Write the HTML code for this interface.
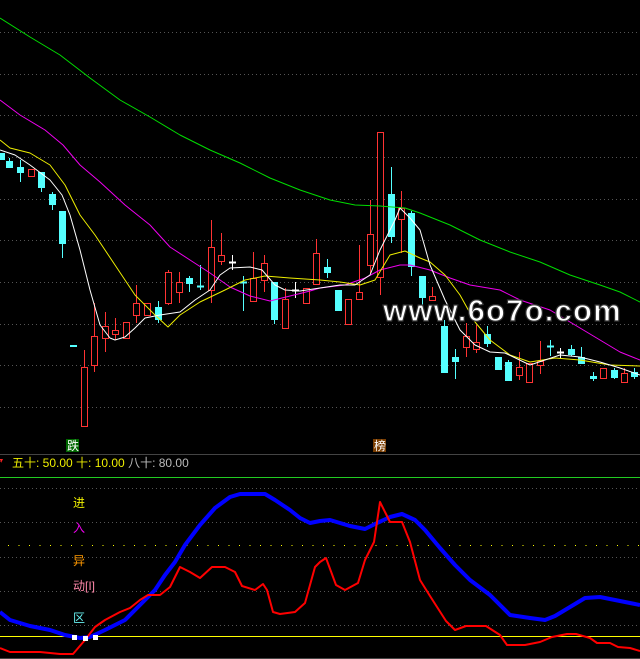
<!DOCTYPE html>
<html><head><meta charset="utf-8"><style>
html,body{margin:0;padding:0;background:#000;width:640px;height:659px;overflow:hidden}
svg{display:block}
text{font-family:"Liberation Sans","Noto Sans CJK SC",sans-serif}
</style></head><body>
<svg id="s" width="640" height="659" viewBox="0 0 640 659" xmlns="http://www.w3.org/2000/svg" shape-rendering="crispEdges">
<g stroke="#555" stroke-dasharray="1 3" stroke-width="1">
<line x1="0" y1="32.5" x2="640" y2="32.5"/><line x1="0" y1="74.5" x2="640" y2="74.5"/><line x1="0" y1="115.5" x2="640" y2="115.5"/><line x1="0" y1="157.5" x2="640" y2="157.5"/><line x1="0" y1="199.5" x2="640" y2="199.5"/><line x1="0" y1="240.5" x2="640" y2="240.5"/><line x1="0" y1="282.5" x2="640" y2="282.5"/><line x1="0" y1="324.5" x2="640" y2="324.5"/><line x1="0" y1="365.5" x2="640" y2="365.5"/><line x1="0" y1="407.5" x2="640" y2="407.5"/>
<line x1="0" y1="488.5" x2="640" y2="488.5"/><line x1="0" y1="522.5" x2="640" y2="522.5"/><line x1="0" y1="557.5" x2="640" y2="557.5"/><line x1="0" y1="591.5" x2="640" y2="591.5"/><line x1="0" y1="625.5" x2="640" y2="625.5"/>
</g>
<line x1="8" y1="545.5" x2="640" y2="545.5" stroke="#ff0" stroke-dasharray="1 9.5"/>
<line x1="0" y1="454.5" x2="640" y2="454.5" stroke="#444"/>
<line x1="0" y1="477.5" x2="640" y2="477.5" stroke="#2c2"/>
<line x1="0" y1="636.5" x2="640" y2="636.5" stroke="#ff0"/>
<line x1="0" y1="658.5" x2="640" y2="658.5" stroke="#444"/>
<g id="c"></g>
<g fill="none" stroke-linejoin="round" shape-rendering="auto">
<polyline stroke="#0d0" points="0,18 30,37 60,55 90,78 120,100 150,117 180,135 210,150 240,163 270,178 300,190 330,200 355,205 380,206 405,208 420,213 450,225 480,240 510,252 540,262 570,275 600,285 620,292 640,302"/>
<polyline stroke="#e0e" points="0,100 20,115 45,130 63,145 80,165 100,182 125,205 150,225 170,247 190,260 210,273 230,287 250,296 270,301 290,296 310,291 320,288 345,285 365,278 380,270 400,265 410,265 430,270 450,278 470,285 500,290 520,300 550,310 580,328 600,340 620,352 640,360"/>
<polyline stroke="#ee0" points="0,140 10,148 30,153 50,165 65,185 80,215 95,235 115,265 135,295 155,315 168,327 180,315 200,302 225,290 245,280 265,276 290,278 320,280 340,282 360,285 375,280 390,255 405,251 420,258 430,262 445,275 460,295 475,322 490,340 510,355 530,362 555,358 580,360 610,365 640,366"/>
<polyline stroke="#fff" points="0,150 15,155 30,165 50,180 62,195 70,215 80,250 90,290 100,325 110,338 115,340 125,337 135,328 145,318 160,315 180,312 195,300 210,290 220,275 230,268 250,267 262,270 275,285 285,290 300,291 320,288 340,285 355,285 370,275 380,250 395,220 400,208 410,218 420,230 430,265 445,300 460,330 475,345 490,352 505,353 530,365 545,360 560,355 580,357 600,362 620,368 640,375"/>
<polyline stroke="#00f" stroke-width="4" points="0,612 10,620 30,626 50,630 65,635 80,638 90,637 105,630 125,620 140,605 155,590 165,575 175,562 185,545 200,525 215,508 230,497 240,494 265,494 275,500 290,510 300,518 310,523 320,521 330,520 350,526 365,529 375,524 390,517 402,514 415,520 425,530 440,548 455,565 470,580 490,595 510,615 530,618 545,620 555,616 570,607 585,598 600,597 615,600 630,603 640,605"/>
<polyline stroke="#f00" stroke-width="2" points="0,648 10,652 40,652 60,654 73,654 85,640 95,627 105,620 120,612 130,608 140,600 148,595 160,595 170,587 180,567 190,572 200,578 212,567 225,567 235,572 242,586 255,590 263,584 267,590 273,612 280,614 295,612 305,603 315,567 320,562 326,558 336,585 345,590 358,583 365,560 374,542 380,502 390,522 402,522 410,542 420,580 430,596 446,621 455,630 466,626 486,626 500,635 507,645 525,645 540,642 552,637 567,634 576,634 590,638 597,643 610,643 618,647 630,648 640,651"/>
</g>
<rect x="72" y="635" width="5" height="5" fill="#fff"/><rect x="83" y="636" width="5" height="5" fill="#fff"/><rect x="93" y="635" width="5" height="5" fill="#fff"/>
<rect x="66" y="439" width="13" height="13" fill="#060"/><text x="67" y="450" font-size="12" fill="#fff">跌</text>
<rect x="373" y="439" width="13" height="13" fill="#7a3d00"/><text x="374" y="450" font-size="12" fill="#fff">榜</text>
<path d="M0 459 L3 459 L1 463Z" fill="#f22"/>
<text x="12" y="467" font-size="12" fill="#ee0">五十: 50.00 十: 10.00 <tspan fill="#bbb">八十: 80.00</tspan></text>
<text x="73" y="507" font-size="12" fill="#ee0">进</text>
<text x="73" y="532" font-size="12" fill="#e0e">入</text>
<text x="73" y="565" font-size="12" fill="#f90">异</text>
<text x="73" y="590" font-size="12" fill="#f8a">动[I]</text>
<text x="73" y="622" font-size="12" fill="#6ee">区</text>
<text x="383" y="321" font-size="31" font-weight="bold" fill="#fff" stroke="#333" stroke-width="1.2" letter-spacing="1.2" shape-rendering="auto">www.6o7o.com</text>
</svg>
<script>
var d=[[1,'c',153,160,153,160],[9,'c',161,168,158,168],[20,'c',167,173,160,182],[31,'r',169,176,169,176],[41,'c',172,188,172,192],[52,'c',194,205,192,210],[62,'c',211,244,211,258],[73,'c',345,347,345,347],[84,'r',367,426,350,426],[94,'r',336,365,303,372],[105,'r',326,338,312,352],[115,'r',330,334,318,340],[126,'r',322,338,322,338],[136,'r',303,315,285,323],[147,'r',303,315,303,315],[158,'c',307,320,301,323],[168,'r',272,303,270,305],[179,'r',282,292,272,303],[189,'c',278,284,276,292],[200,'c',286,287,265,290],[211,'r',247,290,220,303],[221,'r',255,261,233,265],[232,'w',262,262,255,270],[243,'c',282,283,276,311],[253,'r',278,301,252,302],[264,'r',263,280,255,292],[274,'c',282,320,282,324],[285,'r',299,328,288,328],[295,'w',290,290,282,298],[306,'r',288,303,288,304],[316,'r',253,284,239,284],[327,'c',267,273,259,278],[338,'c',290,311,290,311],[348,'r',299,324,299,324],[359,'r',292,299,245,299],[370,'r',234,265,200,273],[380,'r',132,277,132,295],[391,'c',194,237,167,243],[401,'r',208,219,191,253],[411,'c',213,267,211,276],[422,'c',276,298,276,313],[432,'r',296,300,287,300],[444,'c',326,373,320,373],[455,'c',357,362,349,379],[466,'r',336,347,323,357],[476,'r',342,349,325,353],[487,'c',334,344,326,347],[498,'c',357,370,357,370],[508,'c',362,381,360,381],[519,'r',367,375,352,380],[529,'r',363,382,363,382],[540,'r',361,365,341,374],[550,'c',346,346,340,356],[560,'w',352,352,348,358],[571,'c',349,355,345,356],[581,'c',357,364,347,364],[593,'c',376,379,372,381],[603,'r',368,378,368,378],[614,'c',370,378,368,379],[624,'r',373,382,368,382],[634,'c',372,377,368,379]];
var g=document.getElementById('c'),h='';
d.forEach(function(a){var x=a[0],col=a[1]=='r'?'#f33':a[1]=='c'?'#5ff':'#fff',o=a[2],c=a[3],lo=a[4],hi=a[5];
h+='<line x1="'+(x+.5)+'" y1="'+lo+'" x2="'+(x+.5)+'" y2="'+hi+'" stroke="'+col+'"/>';
if(a[1]=='r')h+='<rect x="'+(x-2.5)+'" y="'+(o+.5)+'" width="6" height="'+Math.max(c-o,1)+'" fill="#000" stroke="'+col+'"/>';
else if(c-o<2)h+='<line x1="'+(x-3)+'" y1="'+(o+.5)+'" x2="'+(x+4)+'" y2="'+(o+.5)+'" stroke="'+col+'" stroke-width="2"/>';
else h+='<rect x="'+(x-3)+'" y="'+o+'" width="7" height="'+(c-o)+'" fill="'+col+'"/>';});
g.innerHTML=h;
</script>
</body></html>
